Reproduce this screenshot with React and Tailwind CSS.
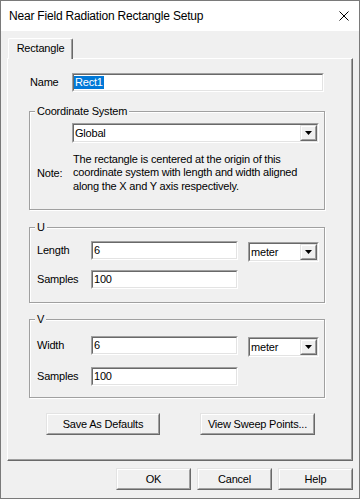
import React from "react";

function Sunken({ className, children }) {
  return (
    <div className={`border border-t-[#a0a0a0] border-l-[#a0a0a0] border-b-white border-r-white ${className}`}>
      <div className="h-full border border-t-[#696969] border-l-[#696969] border-b-[#e3e3e3] border-r-[#e3e3e3] bg-white flex items-center">
        {children}
      </div>
    </div>
  );
}

function Raised({ className, children }) {
  return (
    <div className={`border border-t-[#e3e3e3] border-l-[#e3e3e3] border-b-[#696969] border-r-[#696969] ${className}`}>
      <div className="h-full border border-t-white border-l-white border-b-[#a0a0a0] border-r-[#a0a0a0] bg-[#f0f0f0] flex items-center justify-center">
        {children}
      </div>
    </div>
  );
}

function Combo({ className, value }) {
  return (
    <Sunken className={className}>
      <span className="flex-1 pl-[1px] leading-[14px]">{value}</span>
      <Raised className="w-[17px] h-full">
        <svg width="7" height="4" viewBox="0 0 7 4">
          <polygon points="0,0 7,0 3.5,4" fill="#000" />
        </svg>
      </Raised>
    </Sunken>
  );
}

function Group({ label, className, children }) {
  return (
    <div className={`border border-[#a0a0a0] shadow-[inset_1px_1px_0_#fff,1px_1px_0_#fff] flex flex-col ${className}`}>
      <span className="-mt-[8px] ml-[5px] px-[2px] w-fit bg-[#f0f0f0] leading-[14px]">{label}</span>
      {children}
    </div>
  );
}

export default function App() {
  return (
    <div className="w-[360px] h-[499px] border border-[#7a7a7a] flex flex-col bg-[#f0f0f0] text-[11px] tracking-[-0.2px] text-black font-['Liberation_Sans',Arial,sans-serif] overflow-hidden">
      <div className="h-[30px] shrink-0 bg-white flex items-center justify-between pl-[8px] pr-[10px]">
        <span className="text-[12px]">Near Field Radiation Rectangle Setup</span>
        <svg width="10" height="10" viewBox="0 0 10 10">
          <path d="M0.5 0.5L9.5 9.5M9.5 0.5L0.5 9.5" stroke="#000" strokeWidth="1" fill="none" />
        </svg>
      </div>

      <div className="flex-1 flex flex-col pt-[7px]">
        <div className="relative z-10 ml-[7px] -mb-[1px] w-[65px] h-[21px] bg-[#f0f0f0] border-t border-l border-r border-t-white border-l-white border-r-[#696969] rounded-t-[2px] shadow-[inset_-1px_0_0_#a0a0a0] flex items-center justify-center pb-[2px]">
          Rectangle
        </div>

        <div className="ml-[6px] w-[346px] h-[403px] border border-t-white border-l-white border-b-[#696969] border-r-[#696969] shadow-[inset_-1px_-1px_0_#a0a0a0] flex flex-col">
          <div className="flex items-center mt-[14px]">
            <span className="w-[64px] pl-[22px]">Name</span>
            <Sunken className="w-[252px] h-[19px]">
              <span className="bg-[#0078d7] text-white px-[1px] leading-[13px]">Rect1</span>
            </Sunken>
          </div>

          <Group label="Coordinate System" className="mt-[19px] ml-[21px] w-[296px] h-[99px]">
            <Combo className="mt-[5px] ml-[42px] w-[247px] h-[20px]" value="Global" />
            <div className="flex items-center mt-[10px]">
              <span className="ml-[7px] w-[36px]">Note:</span>
              <div className="leading-[13.4px]">
                <div>The rectangle is centered at the origin of this</div>
                <div>coordinate system with length and width aligned</div>
                <div>along the X and Y axis respectively.</div>
              </div>
            </div>
          </Group>

          <Group label="U" className="mt-[17px] ml-[21px] w-[296px] h-[76px]">
            <div className="flex items-start mt-[7px]">
              <span className="ml-[7px] w-[54px] h-[19px] flex items-center">Length</span>
              <Sunken className="w-[147px] h-[19px]">
                <span className="pl-[1px]">6</span>
              </Sunken>
              <Combo className="mt-[1px] ml-[10px] w-[71px] h-[20px]" value="meter" />
            </div>
            <div className="flex items-center mt-[8px]">
              <span className="ml-[7px] w-[54px]">Samples</span>
              <Sunken className="w-[147px] h-[19px]">
                <span className="pl-[1px]">100</span>
              </Sunken>
            </div>
          </Group>

          <Group label="V" className="mt-[16px] ml-[21px] w-[296px] h-[79px]">
            <div className="flex items-start mt-[10px]">
              <span className="ml-[7px] w-[54px] h-[19px] flex items-center">Width</span>
              <Sunken className="w-[147px] h-[19px]">
                <span className="pl-[1px]">6</span>
              </Sunken>
              <Combo className="mt-[1px] ml-[10px] w-[71px] h-[20px]" value="meter" />
            </div>
            <div className="flex items-center mt-[10px]">
              <span className="ml-[7px] w-[54px]">Samples</span>
              <Sunken className="w-[147px] h-[19px]">
                <span className="pl-[1px]">100</span>
              </Sunken>
            </div>
          </Group>

          <div className="flex mt-[15px] ml-[38px] gap-[40px]">
            <Raised className="w-[114px] h-[22px]">Save As Defaults</Raised>
            <Raised className="w-[115px] h-[22px]">View Sweep Points...</Raised>
          </div>
        </div>

        <div className="flex justify-end gap-[6px] mt-[7px] pr-[6px]">
          <Raised className="w-[75px] h-[22px]">OK</Raised>
          <Raised className="w-[75px] h-[22px]">Cancel</Raised>
          <Raised className="w-[75px] h-[22px]">Help</Raised>
        </div>
      </div>
    </div>
  );
}
